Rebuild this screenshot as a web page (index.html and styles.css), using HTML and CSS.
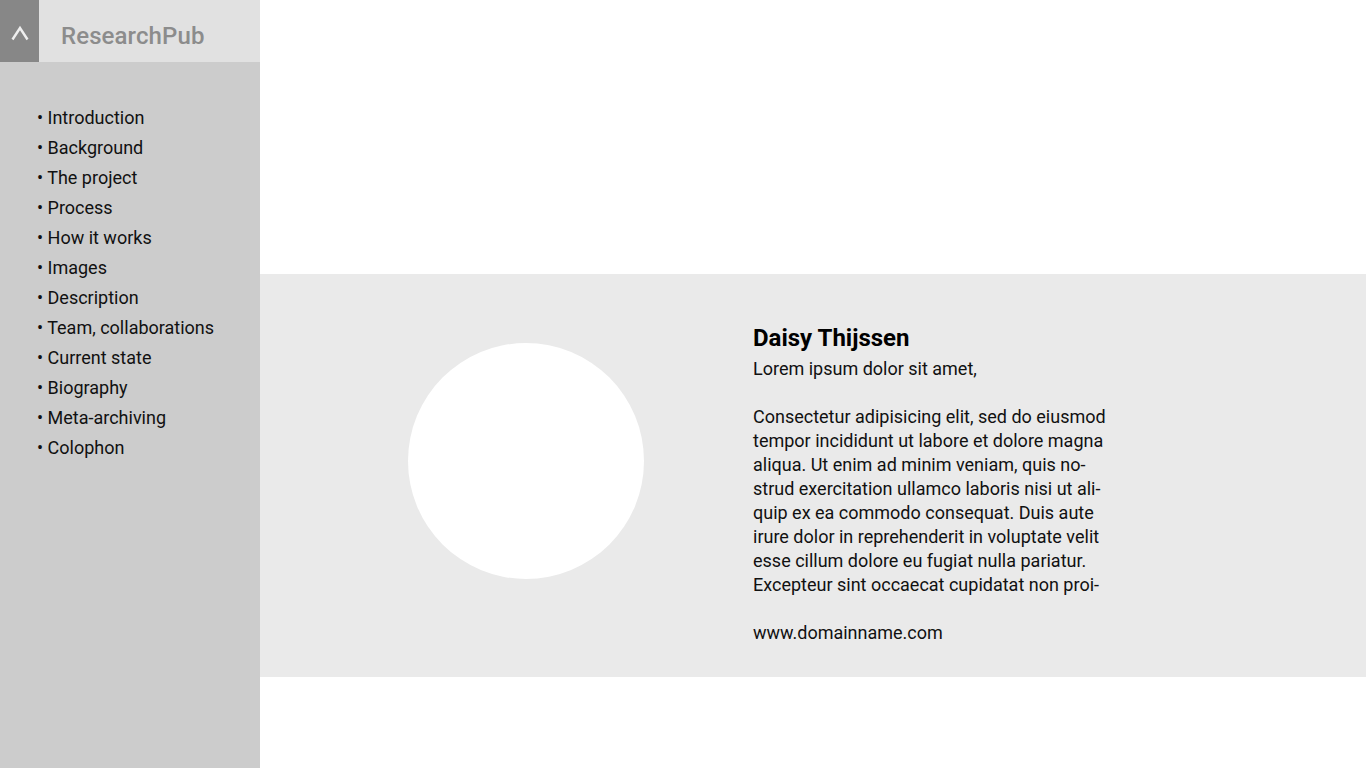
FILE: index.html
```html
<!DOCTYPE html>
<html lang="en">
<head>
<meta charset="utf-8">
<title>ResearchPub</title>
<link rel="stylesheet" href="styles.css">
</head>
<body>
<div class="page">
  <aside class="sidebar">
    <header class="side-header">
      <div class="toggle">
        <svg width="39" height="62" viewBox="0 0 39 62" aria-label="collapse">
          <polyline points="12.5,39.5 20,28 27.5,39.5" fill="none" stroke="#eeeeee" stroke-width="2.4" stroke-linejoin="miter"/>
        </svg>
      </div>
      <div class="brand">ResearchPub</div>
    </header>
    <nav class="toc">
      <ul>
        <li>• Introduction</li>
        <li>• Background</li>
        <li>• The project</li>
        <li>• Process</li>
        <li>• How it works</li>
        <li>• Images</li>
        <li>• Description</li>
        <li>• Team, collaborations</li>
        <li>• Current state</li>
        <li>• Biography</li>
        <li>• Meta-archiving</li>
        <li>• Colophon</li>
      </ul>
    </nav>
  </aside>
  <main class="main">
    <div class="top-space"></div>
    <section class="bio">
      <div class="portrait"></div>
      <div class="bio-text">
        <h2 class="name">Daisy Thijssen</h2>
        <p class="lead">Lorem ipsum dolor sit amet,</p>
        <p class="para">Consectetur adipisicing elit, sed do eiusmod<br>tempor incididunt ut labore et dolore magna<br>aliqua. Ut enim ad minim veniam, quis no-<br>strud exercitation ullamco laboris nisi ut ali-<br>quip ex ea commodo consequat. Duis aute<br>irure dolor in reprehenderit in voluptate velit<br>esse cillum dolore eu fugiat nulla pariatur.<br>Excepteur sint occaecat cupidatat non proi-</p>
        <p class="link">www.domainname.com</p>
      </div>
    </section>
  </main>
</div>
</body>
</html>
```
FILE: styles.css
```css
html, body {
  margin: 0;
  padding: 0;
  background: #ffffff;
}
body {
  font-family: Roboto, "Liberation Sans", sans-serif;
  color: #111111;
}
.page {
  display: flex;
  min-height: 768px;
}
.sidebar {
  width: 260px;
  flex: 0 0 260px;
  background: #cccccc;
  min-height: 768px;
}
.side-header {
  display: flex;
  height: 62px;
  background: #e1e1e1;
}
.toggle {
  width: 39px;
  height: 62px;
  background: #878787;
}
.toggle svg {
  display: block;
}
.brand {
  padding-left: 22px;
  font-size: 24px;
  line-height: 72px;
  height: 62px;
  color: #8c8c8c;
  font-weight: 500;
  letter-spacing: 0.1px;
}
.toc ul {
  list-style: none;
  margin: 0;
  padding: 41px 0 0 37px;
}
.toc li {
  font-size: 18px;
  line-height: 30px;
  color: #111111;
}
.main {
  flex: 1;
  display: flex;
  flex-direction: column;
}
.top-space {
  height: 274px;
}
.bio {
  background: #eaeaea;
  height: 403px;
  display: flex;
  align-items: flex-start;
  padding-left: 148px;
  box-sizing: border-box;
}
.portrait {
  width: 236px;
  height: 236px;
  border-radius: 50%;
  background: #ffffff;
  margin-top: 69px;
  flex: 0 0 236px;
}
.bio-text {
  margin-left: 109px;
  padding-top: 48px;
  font-size: 18px;
  line-height: 24px;
}
.name {
  margin: 0 0 4px;
  padding-top: 1px;
  font-size: 24px;
  line-height: 30px;
  font-weight: 700;
  color: #000000;
}
.lead, .para, .link {
  margin: 0;
}
.lead, .para {
  margin-bottom: 24px;
}
```
